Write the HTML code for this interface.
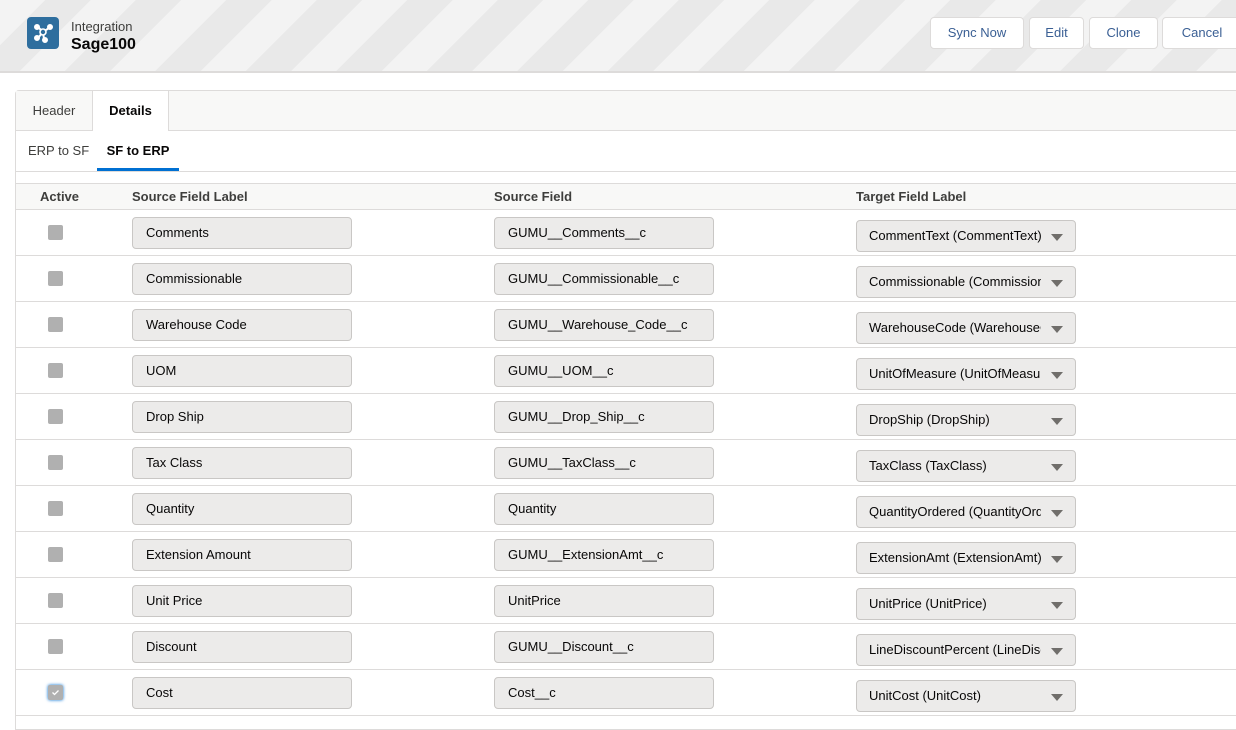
<!DOCTYPE html>
<html><head><meta charset="utf-8"><style>
*{box-sizing:border-box;margin:0;padding:0}
body{width:1236px;height:717px;overflow:hidden;background:#fff;font-family:"Liberation Sans",sans-serif;font-size:13px;color:#080707;position:relative}
.hdr{position:absolute;left:0;top:0;width:1236px;height:73px;border-bottom:2px solid #dddbda;
background:repeating-linear-gradient(135deg,#f3f3f3 0 32px,#e9e9e9 32px 64px)}
.icon{position:absolute;left:27px;top:17px;width:32px;height:32px;border-radius:4px;background:#2e6e9e}
.t1{position:absolute;left:71px;top:19px;font-size:13px;color:#3e3e3c}
.t2{position:absolute;left:71px;top:36px;font-size:16px;font-weight:bold}
.btn{position:absolute;top:17px;height:32px;border:1px solid #dddbda;border-radius:4px;background:#fff;font-size:13px;text-align:center;line-height:30px;color:#3a5f94}
.card{position:absolute;left:15px;top:90px;width:1230px;height:640px;border:1px solid #dddbda;border-radius:4px 0 0 0}
.tabs{position:absolute;left:0;top:0;width:100%;height:40px;background:#f8f8f7;border-bottom:1px solid #dddbda}
.tab{position:absolute;top:0;height:40px;line-height:40px;font-size:13px;text-align:center}
.sub{position:absolute;top:40px;height:40px;line-height:40px;font-size:13px}
.thead{position:absolute;left:0;top:92px;width:100%;height:27px;background:#f8f8f7;border-top:1px solid #dddbda;border-bottom:1px solid #dddbda;font-weight:bold;color:#3e3e3c;line-height:25px}
.row{position:absolute;left:0;width:100%;height:46px;border-bottom:1px solid #dddbda}
.cb{position:absolute;left:32px;top:15px;width:15px;height:15px;background:#b0b0b0;border-radius:2px}
.inp{position:absolute;top:7px;width:220px;height:32px;background:#ecebea;border:1px solid #c9c7c5;border-radius:4px;padding-left:13px;line-height:30px;color:#080707;white-space:nowrap;overflow:hidden}
.sel{position:absolute;left:840px;top:10px;width:220px;height:32px;background:#ecebea;border:1px solid #c9c7c5;border-radius:4px;padding-left:12px;line-height:30px;white-space:nowrap;overflow:hidden}
.sel span{display:inline-block;width:172px;overflow:hidden;vertical-align:top}
.sel i{position:absolute;right:12px;top:13px;width:0;height:0;border-left:6px solid transparent;border-right:6px solid transparent;border-top:7px solid #706e6b}
</style></head><body>
<div class="hdr">
 <div class="icon"><svg width="32" height="32" viewBox="0 0 32 32"><g stroke="#fff" stroke-width="2" fill="#fff"><line x1="11" y1="10" x2="16" y2="15"/><line x1="22" y1="11" x2="16" y2="15"/><line x1="11" y1="21" x2="16" y2="15"/><line x1="16" y1="15" x2="17" y2="22"/><circle cx="10" cy="10" r="2"/><circle cx="23" cy="10" r="2"/><circle cx="10" cy="21" r="2"/><circle cx="18" cy="23" r="2"/></g><circle cx="16" cy="15" r="3" fill="#2e6e9e" stroke="#fff" stroke-width="1.6"/></svg></div>
 <div class="t1">Integration</div>
 <div class="t2">Sage100</div>
 <div class="btn" style="left:930px;width:94px">Sync Now</div>
 <div class="btn" style="left:1029px;width:55px">Edit</div>
 <div class="btn" style="left:1089px;width:69px">Clone</div>
 <div class="btn" style="left:1162px;width:80px">Cancel</div>
</div>
<div class="card">
 <div class="tabs">
  <div class="tab" style="left:0;width:77px;color:#3e3e3c;border-right:1px solid #dddbda">Header</div>
  <div class="tab" style="left:77px;width:76px;background:#fff;font-weight:bold;height:40px;border-right:1px solid #dddbda">Details</div>
 </div>
 <div class="sub" style="left:12px;color:#3e3e3c">ERP to SF</div>
 <div class="sub" style="left:81px;width:82px;text-align:center;font-weight:bold;border-bottom:3px solid #0070d2;height:40px">SF to ERP</div>
 <div style="position:absolute;left:0;top:80px;width:100%;border-top:1px solid #dddbda"></div>
 <div class="thead">
  <span style="position:absolute;left:24px">Active</span>
  <span style="position:absolute;left:116px">Source Field Label</span>
  <span style="position:absolute;left:478px">Source Field</span>
  <span style="position:absolute;left:840px">Target Field Label</span>
 </div>
 <div class="row" style="top:119px"><div class="cb"></div><div class="inp" style="left:116px">Comments</div><div class="inp" style="left:478px">GUMU__Comments__c</div><div class="sel"><span>CommentText (CommentText)</span><i></i></div></div>
 <div class="row" style="top:165px"><div class="cb"></div><div class="inp" style="left:116px">Commissionable</div><div class="inp" style="left:478px">GUMU__Commissionable__c</div><div class="sel"><span>Commissionable (Commissionable)</span><i></i></div></div>
 <div class="row" style="top:211px"><div class="cb"></div><div class="inp" style="left:116px">Warehouse Code</div><div class="inp" style="left:478px">GUMU__Warehouse_Code__c</div><div class="sel"><span>WarehouseCode (WarehouseCode)</span><i></i></div></div>
 <div class="row" style="top:257px"><div class="cb"></div><div class="inp" style="left:116px">UOM</div><div class="inp" style="left:478px">GUMU__UOM__c</div><div class="sel"><span>UnitOfMeasure (UnitOfMeasure)</span><i></i></div></div>
 <div class="row" style="top:303px"><div class="cb"></div><div class="inp" style="left:116px">Drop Ship</div><div class="inp" style="left:478px">GUMU__Drop_Ship__c</div><div class="sel"><span>DropShip (DropShip)</span><i></i></div></div>
 <div class="row" style="top:349px"><div class="cb"></div><div class="inp" style="left:116px">Tax Class</div><div class="inp" style="left:478px">GUMU__TaxClass__c</div><div class="sel"><span>TaxClass (TaxClass)</span><i></i></div></div>
 <div class="row" style="top:395px"><div class="cb"></div><div class="inp" style="left:116px">Quantity</div><div class="inp" style="left:478px">Quantity</div><div class="sel"><span>QuantityOrdered (QuantityOrdered)</span><i></i></div></div>
 <div class="row" style="top:441px"><div class="cb"></div><div class="inp" style="left:116px">Extension Amount</div><div class="inp" style="left:478px">GUMU__ExtensionAmt__c</div><div class="sel"><span>ExtensionAmt (ExtensionAmt)</span><i></i></div></div>
 <div class="row" style="top:487px"><div class="cb"></div><div class="inp" style="left:116px">Unit Price</div><div class="inp" style="left:478px">UnitPrice</div><div class="sel"><span>UnitPrice (UnitPrice)</span><i></i></div></div>
 <div class="row" style="top:533px"><div class="cb"></div><div class="inp" style="left:116px">Discount</div><div class="inp" style="left:478px">GUMU__Discount__c</div><div class="sel"><span>LineDiscountPercent (LineDiscountPercent)</span><i></i></div></div>
 <div class="row" style="top:579px"><div class="cb" style="box-shadow:0 0 3px #0070d2"><svg width="15" height="15"><path d="M4.5 7.5l2 2 4-4" stroke="#fff" stroke-width="1.3" fill="none"/></svg></div><div class="inp" style="left:116px">Cost</div><div class="inp" style="left:478px">Cost__c</div><div class="sel"><span>UnitCost (UnitCost)</span><i></i></div></div>
</div>
</body></html>
